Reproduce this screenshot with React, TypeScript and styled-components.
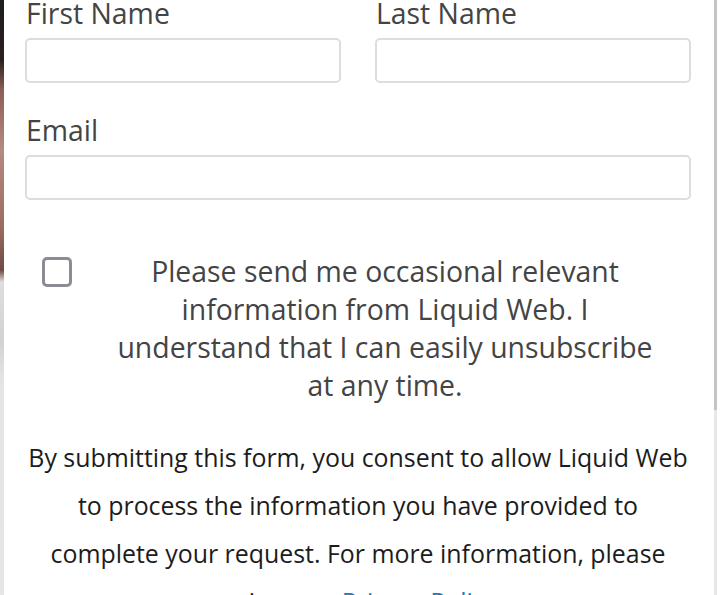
import React from "react";
import styled, { createGlobalStyle } from "styled-components";

const Global = createGlobalStyle`
  html, body { margin: 0; padding: 0; background: #ffffff; }
  body { font-family: "Open Sans", "Noto Sans", sans-serif; overflow: hidden; }
  * { box-sizing: border-box; }
`;

const Page = styled.div`
  display: flex;
  width: 720px;
  height: 595px;
  overflow: hidden;
  background: #ffffff;
`;

const Backdrop = styled.div`
  width: 4px;
  flex: none;
  background: linear-gradient(
    to bottom,
    #1e1c1c 0px,
    #2a2020 60px,
    #8c5e56 90px,
    #b58a80 150px,
    #9a6a60 230px,
    #6e4a44 270px,
    #dedede 282px,
    #d2d2d2 340px,
    #e4e4e4 380px,
    #e6e6e6 595px
  );
`;

const Panel = styled.div`
  flex: 1;
  padding: 0 23px 0 21px;
  display: flex;
  flex-direction: column;
`;

const Row = styled.div`
  display: grid;
  grid-template-columns: 1fr 1fr;
  column-gap: 34px;
`;

const Field = styled.div<{ $top?: number }>`
  display: flex;
  flex-direction: column;
  margin-top: ${(p) => p.$top ?? 0}px;
`;

const Label = styled.label`
  font-size: 28.4px;
  line-height: 26px;
  color: #444444;
  margin-bottom: 12px;
  padding-left: 1px;
`;

const Input = styled.input`
  height: 45px;
  width: 100%;
  border: 2px solid #dddddd;
  border-radius: 5px;
  background: #ffffff;
  font-family: inherit;
  font-size: 18px;
  outline: none;
`;

const OptIn = styled.div`
  display: flex;
  align-items: flex-start;
  margin-top: 52px;
`;

const Box = styled.span`
  flex: none;
  width: 30px;
  height: 30px;
  margin: 5px 7px 0 17px;
  border: 3px solid #8c8c94;
  border-radius: 5px;
  background: #ffffff;
`;

const OptText = styled.p`
  flex: 1;
  margin: 0;
  text-align: center;
  font-size: 28.4px;
  line-height: 38px;
  color: #444444;
`;

const Consent = styled.p`
  margin: 29px 0 0;
  text-align: center;
  font-size: 24.9px;
  line-height: 48px;
  color: #1c1c1c;
`;

const Link = styled.a`
  color: #1b7db8;
  text-decoration: none;
`;

const Track = styled.div`
  width: 3px;
  flex: none;
  margin-right: 3px;
  background: #e8e8e8;
  display: flex;
  flex-direction: column;
`;

const Thumb = styled.div`
  height: 410px;
  background: #c4c4c4;
`;

export default function App() {
  return (
    <>
      <Global />
      <Page>
        <Backdrop />
        <Panel>
          <Row>
            <Field>
              <Label>First Name</Label>
              <Input type="text" />
            </Field>
            <Field>
              <Label>Last Name</Label>
              <Input type="text" />
            </Field>
          </Row>
          <Field $top={34}>
            <Label>Email</Label>
            <Input type="email" />
          </Field>
          <OptIn>
            <Box />
            <OptText>
              Please send me occasional relevant
              <br />
              information from Liquid Web. I
              <br />
              understand that I can easily unsubscribe
              <br />
              at any time.
            </OptText>
          </OptIn>
          <Consent>
            By submitting this form, you consent to allow Liquid Web
            <br />
            to process the information you have provided to
            <br />
            complete your request. For more information, please
            <br />
            review our <Link href="#">Privacy Policy</Link>.
          </Consent>
        </Panel>
        <Track>
          <Thumb />
        </Track>
      </Page>
    </>
  );
}
